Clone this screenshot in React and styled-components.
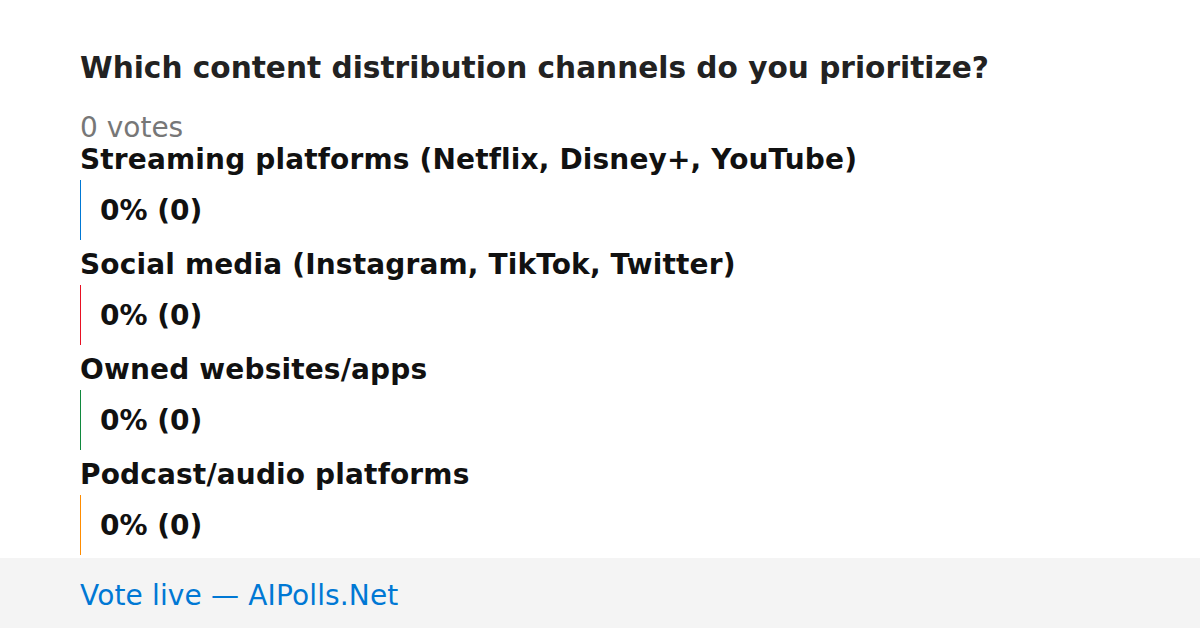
import React from "react";
import styled, { createGlobalStyle } from "styled-components";

const GlobalStyle = createGlobalStyle`
  html, body {
    margin: 0;
    padding: 0;
    background: #ffffff;
  }
  body {
    font-family: "DejaVu Sans", "Liberation Sans", sans-serif;
  }
`;

const Page = styled.div`
  width: 1200px;
  height: 628px;
  display: flex;
  flex-direction: column;
  overflow: hidden;
`;

const Content = styled.div`
  flex-shrink: 0;
  padding: 52px 80px 0;
`;

const Title = styled.h1`
  margin: 0 0 28px;
  font-size: 29.6px;
  line-height: 32px;
  font-weight: bold;
  color: #222222;
`;

const Votes = styled.div`
  font-size: 28px;
  line-height: 30px;
  padding-top: 1px;
  margin-bottom: -1px;
  color: #777777;
`;

const Option = styled.div`
  display: flex;
  flex-direction: column;
  gap: 2px;
  margin-bottom: 7px;

  &:last-child {
    margin-bottom: 0;
  }
`;

const Label = styled.div`
  font-size: 28px;
  line-height: 36px;
  font-weight: bold;
  letter-spacing: 0.15px;
  color: #111111;
`;

const Bar = styled.div`
  height: 60px;
  display: flex;
  align-items: center;
  padding-left: 19px;
  border-left: 1px solid ${(p) => p.$color};
  font-size: 28px;
  font-weight: bold;
  color: #111111;
`;

const Footer = styled.div`
  flex-shrink: 0;
  box-sizing: border-box;
  margin-top: auto;
  height: 70px;
  display: flex;
  align-items: center;
  padding: 4px 80px 0;
  background: #f4f4f4;
  font-size: 28px;
  letter-spacing: 0.15px;
  color: #0078d4;
`;

const options = [
  { label: "Streaming platforms (Netflix, Disney+, YouTube)", color: "#0078d4" },
  { label: "Social media (Instagram, TikTok, Twitter)", color: "#e81123" },
  { label: "Owned websites/apps", color: "#10893e" },
  { label: "Podcast/audio platforms", color: "#ff8c00" },
];

const App = () => (
  <Page>
    <GlobalStyle />
    <Content>
      <Title>Which content distribution channels do you prioritize?</Title>
      <Votes>0 votes</Votes>
      {options.map((o) => (
        <Option key={o.label}>
          <Label>{o.label}</Label>
          <Bar $color={o.color}>0% (0)</Bar>
        </Option>
      ))}
    </Content>
    <Footer>Vote live — AIPolls.Net</Footer>
  </Page>
);

export default App;
